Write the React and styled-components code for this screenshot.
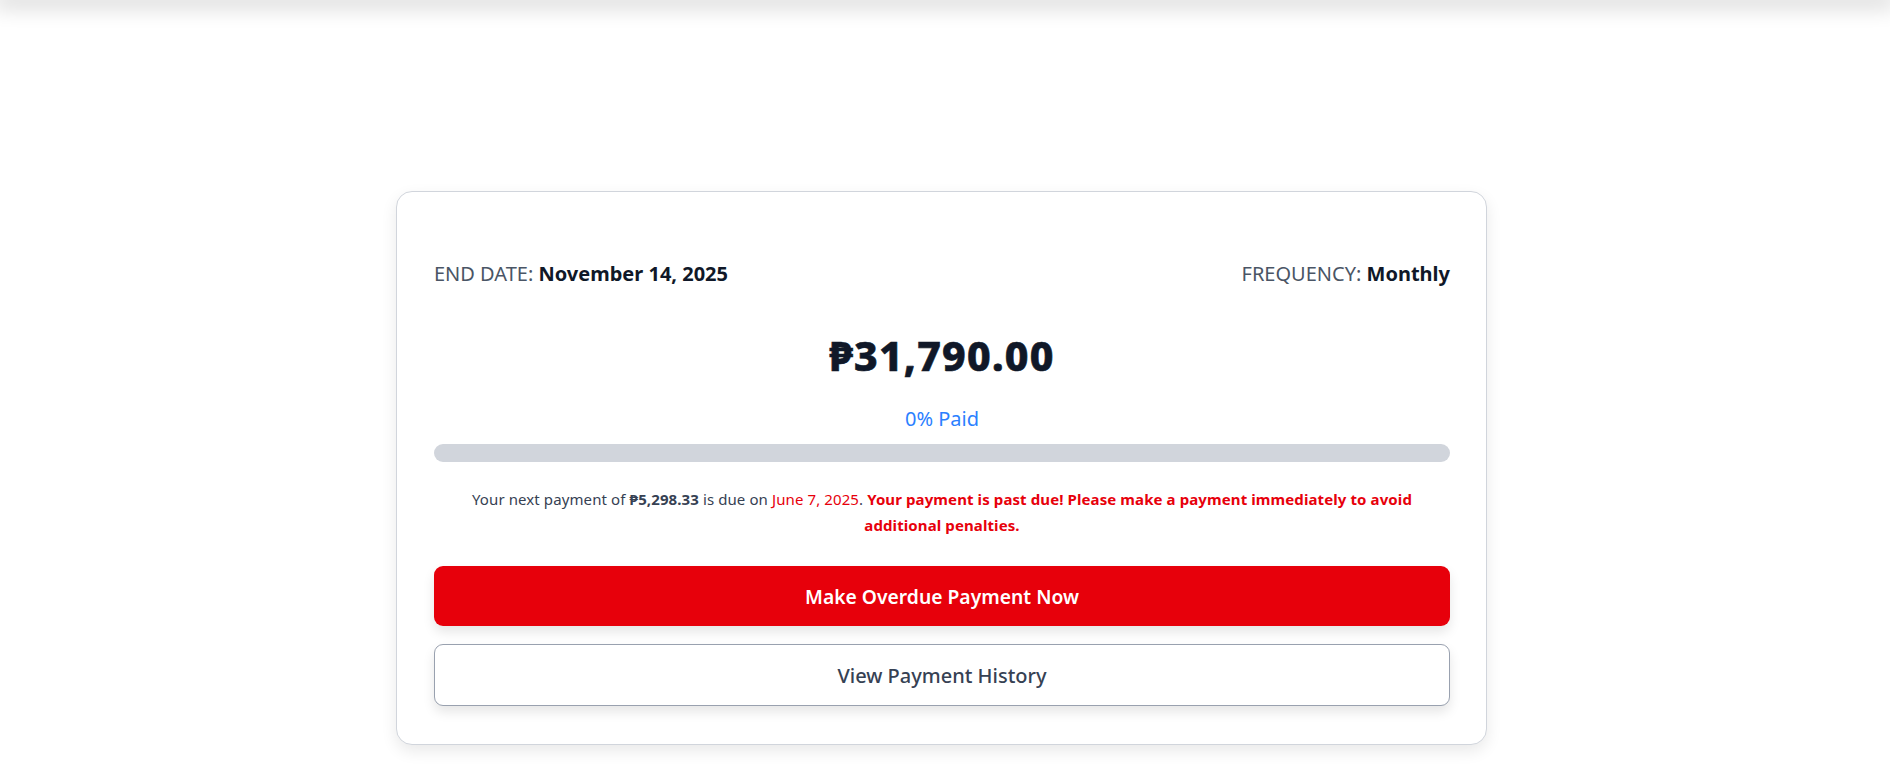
import React from 'react';
import styled, { createGlobalStyle } from 'styled-components';

const GlobalStyle = createGlobalStyle`
  html, body {
    margin: 0;
    padding: 0;
    background: #ffffff;
  }
  body {
    font-family: "Noto Sans", "Open Sans", Arial, sans-serif;
    color: #101828;
  }
`;

const TopBar = styled.div`
  height: 1px;
  margin-top: -1px;
  box-shadow: 0 0 22px 6px rgba(0, 0, 0, 0.2);
`;

const Page = styled.main`
  display: flex;
  justify-content: center;
  padding: 191px 7px 20px 0;
`;

const Card = styled.section`
  box-sizing: border-box;
  width: 1091px;
  padding: 68px 36px 38px 37px;
  border: 1px solid #d1d5dc;
  border-radius: 16px;
  background: #fff;
  box-shadow: 0 6px 16px rgba(0, 0, 0, 0.09);
  display: flex;
  flex-direction: column;
`;

const MetaRow = styled.div`
  display: flex;
  justify-content: space-between;
  align-items: center;
  font-size: 20px;
  line-height: 28px;
`;

const MetaLabel = styled.span`
  color: #4a5565;
`;

const MetaValue = styled.strong`
  color: #101828;
  font-weight: 700;
`;

const Amount = styled.div`
  margin-top: 43px;
  text-align: center;
  font-size: 41px;
  line-height: 48px;
  font-weight: 800;
  letter-spacing: 1.2px;
  color: #101828;
  -webkit-text-stroke: 0.6px #101828;
`;

const PaidLabel = styled.div`
  margin-top: 26px;
  text-align: center;
  font-size: 20px;
  line-height: 28px;
  color: #2b7fff;
`;

const Track = styled.div`
  margin-top: 11px;
  height: 18px;
  border-radius: 999px;
  background: #d1d5dc;
  overflow: hidden;
`;

const Fill = styled.div`
  height: 100%;
  background: #2b7fff;
`;

const Notice = styled.p`
  margin: 24px 30px 0;
  text-align: center;
  font-size: 15px;
  line-height: 26px;
  letter-spacing: 0.1px;
  color: #364153;
`;

const Amt = styled.strong`
  font-weight: 700;
`;

const Due = styled.span`
  color: #e7000b;
`;

const Warning = styled.strong`
  color: #e7000b;
  font-weight: 700;
`;

const Button = styled.button`
  box-sizing: border-box;
  width: 100%;
  height: ${(p) => (p.$primary ? '60px' : '62px')};
  margin-top: ${(p) => (p.$primary ? '28px' : '18px')};
  border-radius: 9px;
  font-family: inherit;
  font-size: ${(p) => (p.$primary ? '19.3px' : '20px')};
  cursor: pointer;
  border: ${(p) => (p.$primary ? 'none' : '1px solid #99a1af')};
  background: ${(p) => (p.$primary ? '#e7000b' : '#ffffff')};
  color: ${(p) => (p.$primary ? '#ffffff' : '#364153')};
  font-weight: ${(p) => (p.$primary ? 600 : 500)};
  box-shadow: 0 6px 12px rgba(0, 0, 0, 0.1);
`;

const App = () => {
  const paid = 0;
  return (
    <>
      <GlobalStyle />
      <TopBar />
      <Page>
        <Card>
          <MetaRow>
            <div>
              <MetaLabel>END DATE: </MetaLabel>
              <MetaValue>November 14, 2025</MetaValue>
            </div>
            <div>
              <MetaLabel>FREQUENCY: </MetaLabel>
              <MetaValue>Monthly</MetaValue>
            </div>
          </MetaRow>
          <Amount>₱31,790.00</Amount>
          <PaidLabel>{paid}% Paid</PaidLabel>
          <Track>
            <Fill style={{ width: `${paid}%` }} />
          </Track>
          <Notice>
            Your next payment of <Amt>₱5,298.33</Amt> is due on{' '}
            <Due>June 7, 2025</Due>.{' '}
            <Warning>
              Your payment is past due! Please make a payment immediately to avoid additional penalties.
            </Warning>
          </Notice>
          <Button $primary>Make Overdue Payment Now</Button>
          <Button>View Payment History</Button>
        </Card>
      </Page>
    </>
  );
};

export default App;
